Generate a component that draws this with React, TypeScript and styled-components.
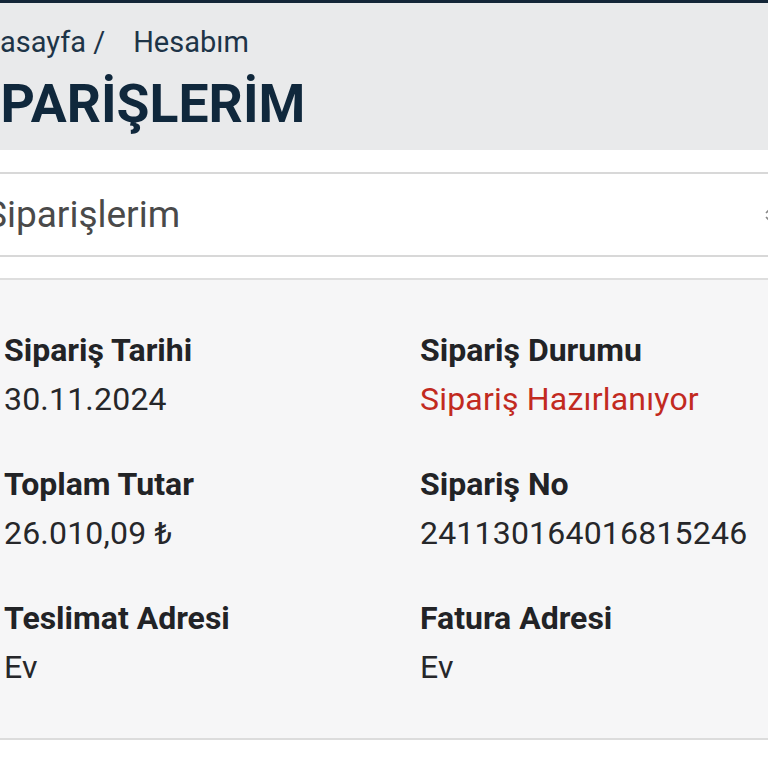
import React, { FC } from "react";
import styled, { createGlobalStyle } from "styled-components";

const GlobalStyle = createGlobalStyle`
  html, body {
    margin: 0;
    padding: 0;
    background: #ffffff;
    overflow: hidden;
  }
  body {
    font-family: Roboto, "Noto Sans", Arial, sans-serif;
  }
`

const Viewport = styled.div`
  width: 768px;
  height: 768px;
  overflow: hidden;
  border-top: 3px solid #142638;
  box-sizing: border-box;
`

// the screen is zoomed in, so the page runs past the left edge
const Page = styled.div`
  margin-left: -40px;
  width: 850px;
`

const Header = styled.div`
  background: #e9eaeb;
  height: 147px;
  box-sizing: border-box;
  padding-top: 21px;
  display: flex;
  flex-direction: column;
`

const Breadcrumb = styled.div`
  display: flex;
  gap: 28px;
  margin-left: 5px;
  font-size: 29px;
  color: #1d3447;
  line-height: 36px;
`

const Title = styled.h1`
  margin: 14px 0 0 -8px;
  font-size: 53.5px;
  font-weight: 700;
  color: #10283c;
  line-height: 60px;
`

const SelectBox = styled.div`
  margin-top: 22px;
  height: 85px;
  box-sizing: border-box;
  border-top: 2px solid #d8d8d8;
  border-bottom: 2px solid #d8d8d8;
  display: flex;
  align-items: center;
  justify-content: space-between;
  padding: 0 36px 0 25px;
  font-size: 37px;
  color: #4a4a4a;
  background: #fff;
`

const SelectArrow = styled.svg`
  width: 10px;
  height: 16px;
  color: #888;
`

const Panel = styled.div`
  margin-top: 21px;
  height: 462px;
  box-sizing: border-box;
  background: #f6f6f7;
  border-top: 2px solid #dedede;
  border-bottom: 2px solid #dcdcdc;
  padding: 50px 0 0 44px;
  display: grid;
  grid-template-columns: 416px 1fr;
  grid-auto-rows: 134px;
`

const Field = styled.div`
  display: flex;
  flex-direction: column;
`

const Label = styled.div`
  font-size: 32px;
  font-weight: 700;
  color: #222326;
  line-height: 40px;
`

const Value = styled.div<{ $accent?: boolean }>`
  font-size: 32px;
  letter-spacing: 0.2px;
  color: ${p => (p.$accent ? "#c22a1f" : "#26272a")};
  line-height: 40px;
  margin-top: 9px;
`

const fields = [
  { label: "Sipariş Tarihi", value: "30.11.2024" },
  { label: "Sipariş Durumu", value: "Sipariş Hazırlanıyor", accent: true },
  { label: "Toplam Tutar", value: "26.010,09 ₺" },
  { label: "Sipariş No", value: "241130164016815246" },
  { label: "Teslimat Adresi", value: "Ev" },
  { label: "Fatura Adresi", value: "Ev" },
]

const App: FC = () => {
  return (
    <React.Fragment>
      <GlobalStyle />
      <Viewport>
        <Page>
          <Header>
            <Breadcrumb>
              <span>Anasayfa /</span>
              <span>Hesabım</span>
            </Breadcrumb>
            <Title>SİPARİŞLERİM</Title>
          </Header>

          <SelectBox>
            <span>Siparişlerim</span>
            <SelectArrow viewBox="0 0 10 16" fill="none" stroke="currentColor" strokeWidth="1.6">
              <path d="M2 6l3-3 3 3M2 10l3 3 3-3" />
            </SelectArrow>
          </SelectBox>

          <Panel>
            {fields.map(f => (
              <Field key={f.label}>
                <Label>{f.label}</Label>
                <Value $accent={f.accent}>{f.value}</Value>
              </Field>
            ))}
          </Panel>
        </Page>
      </Viewport>
    </React.Fragment>
  )
}

export default App;
